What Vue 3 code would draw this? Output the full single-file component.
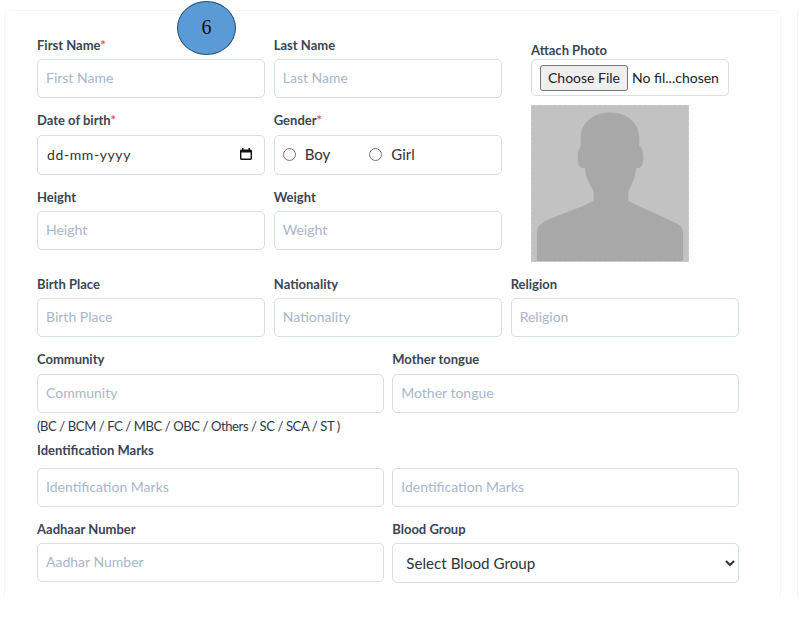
<script setup>
const topRows = [
  [
    { label: 'First Name', req: true, ph: 'First Name' },
    { label: 'Last Name', ph: 'Last Name' },
  ],
]
const heightRow = [
  { label: 'Height', ph: 'Height' },
  { label: 'Weight', ph: 'Weight' },
]
const birthRow = [
  { label: 'Birth Place', ph: 'Birth Place' },
  { label: 'Nationality', ph: 'Nationality' },
  { label: 'Religion', ph: 'Religion' },
]
</script>

<template>
  <div class="page">
    <div class="card">
      <div class="badge">6</div>

      <div class="top">
        <div class="topLeft">
          <div v-for="(row, i) in topRows" :key="i" class="grid2">
            <div v-for="f in row" :key="f.label" class="field">
              <label>{{ f.label }}<span v-if="f.req" class="req">*</span></label>
              <input type="text" :placeholder="f.ph" />
            </div>
          </div>

          <div class="grid2 rowGap dobRow">
            <div class="field">
              <label>Date of birth<span class="req">*</span></label>
              <div class="box dateBox">
                <span>dd-mm-yyyy</span>
                <svg width="14" height="14" viewBox="0 0 14 14">
                  <path d="M3 1v1.500H2.400A1.400 1.400 0 0 0 1 3.900v7.700A1.400 1.400 0 0 0 2.400 13h9.200a1.400 1.400 0 0 0 1.400-1.400V3.900a1.400 1.400 0 0 0-1.400-1.400H11V1H9.500v1.500h-5V1zM2.400 5.500h9.200v6.100H2.400z" fill="#111" />
                </svg>
              </div>
            </div>
            <div class="field">
              <label>Gender<span class="req">*</span></label>
              <div class="box genderBox">
                <label class="radio"><input type="radio" name="gender" />Boy</label>
                <label class="radio"><input type="radio" name="gender" />Girl</label>
              </div>
            </div>
          </div>

          <div class="grid2 rowGap">
            <div v-for="f in heightRow" :key="f.label" class="field">
              <label>{{ f.label }}</label>
              <input type="text" :placeholder="f.ph" />
            </div>
          </div>
        </div>

        <div class="photoCol">
          <label>Attach Photo</label>
          <div class="fileBox">
            <button type="button">Choose File</button>
            <span>No fil...chosen</span>
          </div>
          <div class="photo">
            <svg width="157" height="157" viewBox="0 0 157 157">
              <path d="M5 157V128C5 121 9 117 16 114C32 107 48 102 62 95V85C57 78 54 70 53 62C48 63 46 58 46 52C46 46 47 42 49 40V32C49 16 62 6 78.500 6C95 6 108 16 108 32V40C111 42 112 46 112 52C112 58 110 63 105 62C104 70 101 78 97 85V95C110 102 126 108 142 116C149 119 152 122 152 128V157Z" fill="#a8a8a8" />
            </svg>
          </div>
        </div>
      </div>

      <div class="grid3 rowGap">
        <div v-for="f in birthRow" :key="f.label" class="field">
          <label>{{ f.label }}</label>
          <input type="text" :placeholder="f.ph" />
        </div>
      </div>

      <div class="grid2 rowGap communityRow">
        <div class="field">
          <label>Community</label>
          <input type="text" placeholder="Community" />
        </div>
        <div class="field">
          <label>Mother tongue</label>
          <input type="text" placeholder="Mother tongue" />
        </div>
      </div>
      <p class="hint">(BC / BCM / FC / MBC / OBC / Others / SC / SCA / ST )</p>

      <div class="grid2 marksRow">
        <div class="field">
          <label>Identification Marks</label>
          <input type="text" placeholder="Identification Marks" />
        </div>
        <div class="field">
          <label>&nbsp;</label>
          <input type="text" placeholder="Identification Marks" />
        </div>
      </div>

      <div class="grid2 rowGap">
        <div class="field">
          <label>Aadhaar Number</label>
          <input type="text" placeholder="Aadhar Number" />
        </div>
        <div class="field">
          <label>Blood Group</label>
          <select>
            <option>Select Blood Group</option>
          </select>
        </div>
      </div>
    </div>
    <div class="nextCard"></div>
  </div>
</template>

<style scoped>
.page {
  display: flex;
  width: 803px;
  height: 598px;
  padding: 10px 0 0 4px;
  box-sizing: border-box;
  overflow: hidden;
  font-family: "Lato", "Open Sans", sans-serif;
  color: #2d3748;
}

.card {
  position: relative;
  width: 777px;
  flex-shrink: 0;
  box-sizing: border-box;
  padding: 26px 41px 0 32px;
  border: 1px solid #f5f6f8;
  border-bottom: none;
  border-radius: 6px 6px 0 0;
}

.nextCard {
  margin-left: 16px;
  width: 10px;
  border-left: 1px solid #f3f4f6;
}

.badge {
  position: absolute;
  left: 172px;
  top: -10px;
  width: 59px;
  height: 54px;
  box-sizing: border-box;
  padding-bottom: 2px;
  border: 1.5px solid #1f4e79;
  border-radius: 50%;
  background: #5b9bd5;
  color: #111;
  font-family: "Liberation Serif", serif;
  font-size: 20px;
  display: flex;
  align-items: center;
  justify-content: center;
}

.top {
  display: flex;
}

.topLeft {
  width: 465px;
  flex-shrink: 0;
}

.grid2 {
  display: grid;
  grid-template-columns: 1fr 1fr;
  column-gap: 8.5px;
}

.grid3 {
  display: grid;
  grid-template-columns: repeat(3, 1fr);
  column-gap: 8.5px;
}

.rowGap {
  margin-top: 14px;
}

.field {
  display: flex;
  flex-direction: column;
  min-width: 0;
}

label {
  display: block;
  height: 16px;
  margin-bottom: 6px;
  font-size: 13px;
  font-weight: 700;
  line-height: 16px;
  color: #3a4556;
}

.req {
  color: #f0506e;
}

input[type="text"] {
  height: 39px;
  width: 100%;
  box-sizing: border-box;
  padding: 0 8px 2px;
  border: 1.5px solid #d5deea;
  border-radius: 5px;
  background: #fff;
  font-family: inherit;
  font-size: 14px;
  outline: none;
}

input[type="text"]::placeholder {
  color: #aab6ca;
  opacity: 1;
}

.box {
  height: 40px;
  box-sizing: border-box;
  padding-bottom: 2px;
  border: 1.5px solid #d5deea;
  border-radius: 5px;
  display: flex;
  align-items: center;
  font-size: 14px;
  color: #333;
}

.dobRow label:not(.radio),
.communityRow label {
  margin-bottom: 7px;
}

.dateBox {
  justify-content: space-between;
  padding-left: 9px;
  padding-right: 11px;
  letter-spacing: 0.6px;
}

.genderBox {
  padding-left: 7px;
  gap: 38px;
}

.radio {
  display: flex;
  align-items: center;
  height: auto;
  margin: 0;
  font-size: 15px;
  font-weight: 400;
  color: #333;
}

.radio input {
  width: 13px;
  height: 13px;
  margin: 0 9px 0 1px;
}

.photoCol {
  margin-left: 29px;
  padding-top: 5px;
}

.photoCol label {
  margin-bottom: 1px;
}

.fileBox {
  width: 198px;
  height: 37px;
  box-sizing: border-box;
  border: 1.5px solid #d5deea;
  border-radius: 5px;
  padding: 0 8px;
  margin-bottom: 9px;
  display: flex;
  align-items: center;
  gap: 4px;
  font-size: 14px;
  color: #222;
  white-space: nowrap;
}

.fileBox button {
  width: 88px;
  height: 26px;
  padding: 0;
  border: 1px solid #767676;
  border-radius: 3px;
  background: #efefef;
  color: #222;
  font-family: inherit;
  font-size: 14px;
}

.photo {
  width: 158px;
  height: 157px;
  box-sizing: border-box;
  border: 1px dashed #c9ccd6;
  background: #c2c2c2;
  display: flex;
  overflow: hidden;
}

.hint {
  margin: 5px 0 0;
  font-size: 13px;
  letter-spacing: -0.38px;
  line-height: 16px;
  color: #2d3748;
}

.marksRow {
  margin-top: 8px;
}

.marksRow label {
  margin-bottom: 10px;
}

select {
  height: 40px;
  width: 100%;
  box-sizing: border-box;
  padding: 0 8px 0 9px;
  border: 1.5px solid #d5deea;
  border-radius: 5px;
  background: #fff;
  font-family: inherit;
  font-size: 15.2px;
  color: #333;
}
</style>
